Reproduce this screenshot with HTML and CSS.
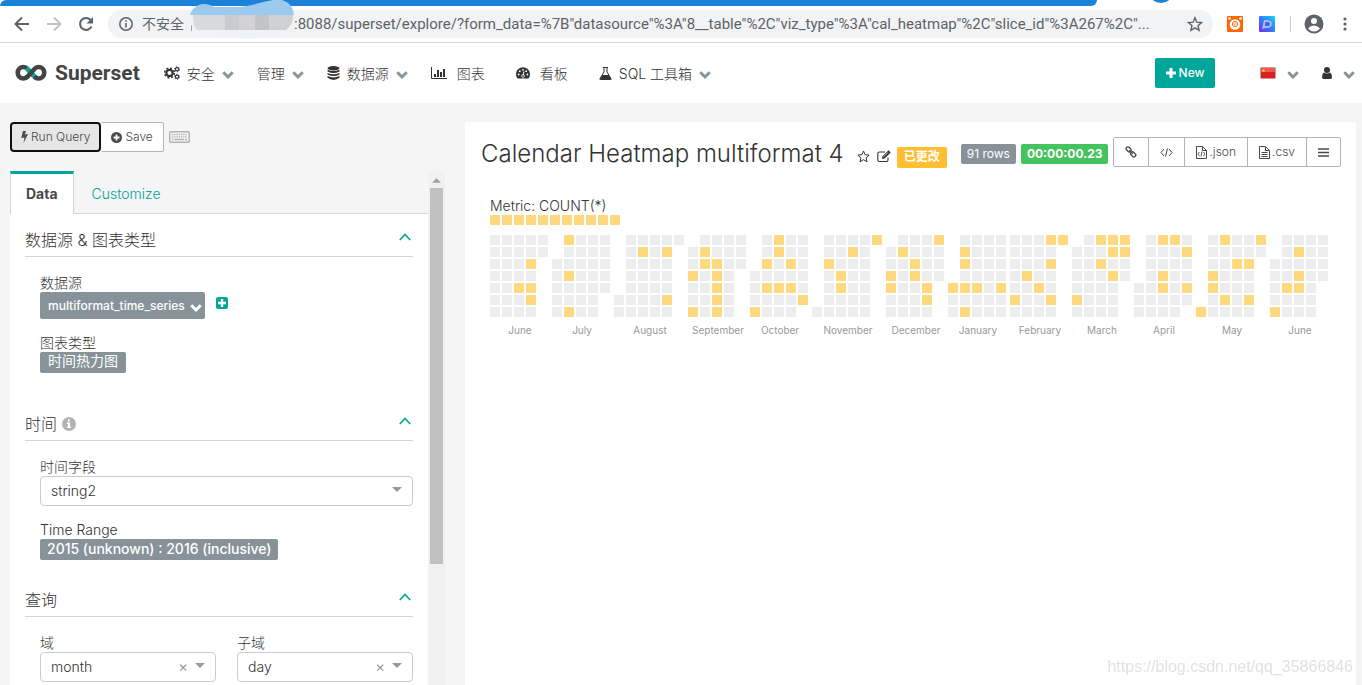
FILE: index.html
```html
<!DOCTYPE html>
<html lang="zh-CN">
<head>
<meta charset="utf-8">
<title>Calendar Heatmap multiformat 4</title>
<link rel="stylesheet" href="styles.css">
</head>
<body>
<svg class="defs" aria-hidden="true">
  <symbol id="chev-down" viewBox="0 0 12 8"><path d="M1.3 1.3 6 6l4.700-4.700" fill="none" stroke="currentColor" stroke-width="2.900"/></symbol>
  <symbol id="chev-up" viewBox="0 0 12 8"><path d="M.8 7 6 1.500 11.200 7" fill="none" stroke="currentColor" stroke-width="1.600"/></symbol>
  <symbol id="caret" viewBox="0 0 10 5"><path d="M0 0h10L5 5z" fill="currentColor"/></symbol>
  <symbol id="plus" viewBox="0 0 10 10"><path d="M3.500 0h3v3.500H10v3H6.500V10h-3V6.500H0v-3h3.500z" fill="currentColor"/></symbol>
</svg>

<div class="browser">
  <div class="tabstrip"><span class="strip-main"></span><span class="strip-dot"></span></div>
  <div class="toolbar">
    <button class="tool" aria-label="Back"><svg width="16" height="16" viewBox="0 0 16 16"><path d="M15 8H2M8 1.500 1.500 8 8 14.500" fill="none" stroke="#5f6368" stroke-width="2"/></svg></button>
    <button class="tool" aria-label="Forward"><svg width="16" height="16" viewBox="0 0 16 16"><path d="M1 8h13M8 1.500 14.500 8 8 14.500" fill="none" stroke="#bdc1c6" stroke-width="2"/></svg></button>
    <button class="tool reload" aria-label="Reload"><svg width="16" height="16" viewBox="0 0 16 16"><path d="M13.500 10.500A6 6 0 1 1 12.600 4" fill="none" stroke="#5f6368" stroke-width="2"/><path d="M15 1v6.500H8.500z" fill="#5f6368"/></svg></button>
    <div class="omnibox">
      <svg class="info" width="14" height="14" viewBox="0 0 14 14"><circle cx="7" cy="7" r="6.200" fill="none" stroke="#5f6368" stroke-width="1.500"/><path d="M7 6v4.500M7 3.300v1.500" stroke="#5f6368" stroke-width="1.600"/></svg>
      <span class="insecure">不安全</span>
      <span class="bar"></span>
      <span class="mask"><svg width="106" height="40" viewBox="0 0 106 40"><path d="M1 15C3 8 9 4 15 4q6 0 10 3h26C62 6 72 2 84 0h9c7 2 11 7 12 15z" fill="#9ccaee"/><path d="M2 15h103c1 7-2 14-9 17-12 1-14 5-28 6-8 2-30 0-39-5H12C4 29-2 23 2 15z" fill="#f0f2f5"/><path d="M4 15h32v15H8q-5-6-4-15z" fill="#d8dadc"/><path d="M36 15h14v15H36z" fill="#c8ccd2"/><path d="M50 15h16v15H50z" fill="#d3d3d5"/><path d="M66 15h14v15H66z" fill="#c2c4c6"/><path d="M80 15h24q0 10-7 15H80z" fill="#cfd1d3"/></svg></span>
      <span class="url">:8088/superset/explore/?form_data=%7B"datasource"%3A"8__table"%2C"viz_type"%3A"cal_heatmap"%2C"slice_id"%3A267%2C"...</span>
      <button class="tool star" aria-label="Bookmark"><svg width="16" height="16" viewBox="0 0 16 16"><path d="m8 1.800 1.800 4.400 4.700.4L11 9.700l1.100 4.600L8 11.800l-4.100 2.500L5 9.700 1.500 6.600l4.700-.4z" fill="none" stroke="#5f6368" stroke-width="1.400"/></svg></button>
    </div>
    <svg class="ext" width="16" height="16" viewBox="0 0 16 16"><rect width="16" height="16" rx="1" fill="#f60"/><circle cx="8" cy="8.500" r="5.300" fill="#fff"/><circle cx="2.500" cy="2.500" r="1.300" fill="#fff"/><circle cx="13.500" cy="2.500" r="1.300" fill="#fff"/><circle cx="8" cy="8" r="2.600" fill="none" stroke="#f60"/><circle cx="8" cy="8" r=".8" fill="#f60"/></svg>
    <svg class="ext" width="16" height="16" viewBox="0 0 16 16"><defs><linearGradient id="dg" x1="0" y1="1" x2="1" y2="0"><stop offset="0" stop-color="#7a2cf5"/><stop offset=".5" stop-color="#2f7df6"/><stop offset="1" stop-color="#12d4ff"/></linearGradient></defs><rect width="16" height="16" rx="1" fill="url(#dg)"/><path d="M3 13 5 4h4q4 1 4 4t-4 4H6z" fill="#a9b8ff"/><path d="M6.500 6H9q2 .5 2 2t-2 2H6z" fill="#3b62d8"/></svg>
    <span class="divider"></span>
    <button class="tool" aria-label="Profile"><svg width="20" height="20" viewBox="0 0 20 20"><circle cx="10" cy="10" r="9.500" fill="#5f6368"/><circle cx="10" cy="7" r="3" fill="#fff"/><path d="M4 14.500q2.500-3 6-3t6 3q-2.500 3-6 3t-6-3z" fill="#fff"/></svg></button>
    <button class="tool more" aria-label="Menu"><svg width="4" height="14" viewBox="0 0 4 14"><circle cx="2" cy="2" r="1.600" fill="#5f6368"/><circle cx="2" cy="7" r="1.600" fill="#5f6368"/><circle cx="2" cy="12" r="1.600" fill="#5f6368"/></svg></button>
  </div>
</div>

<header class="navbar">
  <a class="brand" href="#"><svg width="32" height="18" viewBox="0 0 32 18"><path d="M18.500 11.800 16 9l-3.500-4Q10.800 3 8.500 3a5.700 5.700 0 0 0 0 11.500q2.500 0 4.300-2.200" fill="none" stroke="#444" stroke-width="4.600"/><path d="m11.500 4 9 9.500" stroke="#00a699" stroke-width="4.600"/><path d="m11.700 13.500 7.500-8.300Q21 3 23.500 3a5.700 5.700 0 0 1 0 11.500q-2.500 0-4.200-1.900" fill="none" stroke="#444" stroke-width="4.600"/></svg><span>Superset</span></a>
  <nav class="menu">
    <a class="drop" href="#"><svg width="16" height="14" viewBox="0 0 16 14"><circle cx="5.500" cy="7" r="3.200" fill="none" stroke="#333" stroke-width="2.200"/><circle cx="5.500" cy="7" r="4.900" fill="none" stroke="#333" stroke-width="1.500" stroke-dasharray="2 1.850"/><circle cx="13" cy="3.300" r="1.600" fill="none" stroke="#333" stroke-width="1.200"/><circle cx="13" cy="3.300" r="2.500" fill="none" stroke="#333" stroke-dasharray="1.200 1.420"/><circle cx="13" cy="10.700" r="1.600" fill="none" stroke="#333" stroke-width="1.200"/><circle cx="13" cy="10.700" r="2.500" fill="none" stroke="#333" stroke-dasharray="1.200 1.420"/></svg><span>安全</span><svg class="chev" width="12" height="8"><use href="#chev-down"/></svg></a>
    <a class="drop" href="#"><span>管理</span><svg class="chev" width="12" height="8"><use href="#chev-down"/></svg></a>
    <a class="drop" href="#"><svg width="13" height="14" viewBox="0 0 13 14"><g fill="#333"><ellipse cx="6.500" cy="2.200" rx="6" ry="2.200"/><path d="M.5 3.700q6 2.600 12 0v1.700q-6 3-12 0zM.5 6.900q6 2.600 12 0v1.700q-6 3-12 0zM.5 10.100q6 2.600 12 0v1.700q-6 4.200-12 0z"/></g></svg><span>数据源</span><svg class="chev" width="12" height="8"><use href="#chev-down"/></svg></a>
    <a class="plain" href="#"><svg width="16" height="12" viewBox="0 0 16 12"><path d="M.5 0v11.500H16" fill="none" stroke="#333"/><path d="M3 7h2v3H3zM6 3h2v7H6zM9 5h2v5H9zM12 2h2v8h-2z" fill="#333"/></svg><span>图表</span></a>
    <a class="plain gauge" href="#"><svg width="14" height="12" viewBox="0 0 14 12"><path d="M1.500 11.500A7 7 0 1 1 12.500 11.500z" fill="#333"/><g fill="#fff"><circle cx="2.600" cy="7.500" r=".9"/><circle cx="3.800" cy="4.200" r=".9"/><circle cx="7" cy="2.800" r=".9"/><circle cx="10.200" cy="4.200" r=".9"/><circle cx="11.400" cy="7.500" r=".9"/></g><path d="m8 4.500-1 4" stroke="#fff"/><circle cx="7" cy="9" r="1.400" fill="none" stroke="#fff" stroke-width=".7"/></svg><span>看板</span></a>
    <a class="drop" href="#"><svg width="13" height="13" viewBox="0 0 13 13"><path d="M4 .5h5M5 .5v4.500L1 11.500q-.4 1 .6 1h9.800q1 0 .6-1L8 5V.5" fill="none" stroke="#333"/><path d="M3.200 8h6.600l2.700 4.500H.6z" fill="#333"/></svg><span>SQL 工具箱</span><svg class="chev" width="12" height="8"><use href="#chev-down"/></svg></a>
  </nav>
  <button class="new"><svg width="10" height="10"><use href="#plus"/></svg>New</button>
  <a class="lang" href="#" aria-label="Language"><svg width="16" height="12" viewBox="0 0 16 12"><rect x=".5" y=".5" width="15" height="11" rx="1" fill="#dc1f1f" stroke="#c99"/><path d="M1 1h14v4H1z" fill="#ec5a50"/><path d="m3.500 1.800.5 1.200h1.200l-1 .8.4 1.200-1.100-.7-1.100.7.4-1.200-1-.8H3z" fill="#fd5"/></svg><svg class="chev" width="12" height="8"><use href="#chev-down"/></svg></a>
  <a class="user" href="#" aria-label="User"><svg width="12" height="12" viewBox="0 0 12 12"><circle cx="6" cy="3" r="3" fill="#333"/><path d="M3 5.500q3 2 6 0 2 1 2 4.500 0 2-1.500 2h-7Q1 12 1 10q0-3.500 2-4.500z" fill="#333"/></svg><svg class="chev" width="12" height="8"><use href="#chev-down"/></svg></a>
</header>

<main class="explore">
  <section class="controls">
    <div class="actions">
      <button class="btn run"><svg width="7" height="12" viewBox="0 0 7 12"><path d="M2 0h3L3.800 3.500 7 3 2.500 12l1-5.500L.3 7z" fill="#484848"/></svg>Run Query</button><button class="btn save"><svg width="11" height="11" viewBox="0 0 11 11"><circle cx="5.500" cy="5.500" r="5.500" fill="#484848"/><path d="M5.500 2.500v6M2.500 5.500h6" stroke="#fff" stroke-width="1.800"/></svg>Save</button>
      <svg class="kbd" width="21" height="12" viewBox="0 0 21 12"><rect x=".75" y=".75" width="19.500" height="10.500" rx="1" fill="none" stroke="#b3b3b3" stroke-width="1.500"/><path d="M3 3.500h15M3 5.800h15" stroke="#b3b3b3" stroke-width="1.300" stroke-dasharray="1.300 .9"/><path d="M3 8.500h1.500m1 0h9.500m1 0H18" stroke="#b3b3b3" stroke-width="1.300"/></svg>
    </div>
    <div class="panel">
      <div class="scroll">
        <div class="tabs"><a class="tab active" href="#">Data</a><a class="tab" href="#">Customize</a></div>
        <div class="group source">
          <h2 class="group-head"><span>数据源 &amp; 图表类型</span><svg width="12" height="8"><use href="#chev-up"/></svg></h2>
          <div class="field">
            <span class="label">数据源</span>
            <div class="inline"><button class="ds">multiformat_time_series<svg width="12" height="8"><use href="#chev-down"/></svg></button><button class="add" aria-label="Add"><svg width="8" height="8"><use href="#plus"/></svg></button></div>
          </div>
          <div class="field"><span class="label">图表类型</span><button class="badge viz">时间热力图</button></div>
        </div>
        <div class="group">
          <h2 class="group-head"><span>时间</span><svg class="hint" width="14" height="14" viewBox="0 0 14 14"><circle cx="7" cy="7" r="7" fill="#b3b3b3"/><path d="M6 2.500h2v2H6zM5 5.500h3v4h1V11H5V9.500h1V7H5z" fill="#fff"/></svg><svg width="12" height="8"><use href="#chev-up"/></svg></h2>
          <div class="field"><label class="label" for="tf">时间字段</label><div class="pick"><select id="tf"><option>string2</option></select><svg class="caret" width="10" height="5"><use href="#caret"/></svg></div></div>
          <div class="field"><span class="label">Time Range</span><button class="badge">2015 (unknown) : 2016 (inclusive)</button></div>
        </div>
        <div class="group">
          <h2 class="group-head"><span>查询</span><svg width="12" height="8"><use href="#chev-up"/></svg></h2>
          <div class="pair">
            <div class="field"><label class="label" for="dom">域</label><div class="pick"><select id="dom"><option>month</option></select><button class="clear" aria-label="Clear">×</button><svg class="caret" width="10" height="5"><use href="#caret"/></svg></div></div>
            <div class="field"><label class="label" for="sub">子域</label><div class="pick"><select id="sub"><option>day</option></select><button class="clear" aria-label="Clear">×</button><svg class="caret" width="10" height="5"><use href="#caret"/></svg></div></div>
          </div>
        </div>
      </div>
      <div class="track"><svg width="9" height="5" viewBox="0 0 10 5"><path d="M0 5h10L5 0z" fill="#a0a0a0"/></svg><div class="thumb"></div></div>
    </div>
  </section>

  <section class="chart">
    <div class="chart-head">
      <h1>Calendar Heatmap multiformat 4</h1>
      <button class="mini fav" aria-label="Favourite"><svg width="13" height="13" viewBox="0 0 13 13"><path d="m6.500 1 1.600 3.700 4 .4-3 2.700.9 4-3.500-2.100L3 11.800l.9-4-3-2.700 4-.4z" fill="none" stroke="#333"/></svg></button>
      <button class="mini" aria-label="Edit"><svg width="14" height="13" viewBox="0 0 14 13"><path d="M11 7.500V10q0 1.500-1.500 1.500H2.300Q.8 11.500.8 10V3.500Q.8 2 2.300 2H8" fill="none" stroke="#333" stroke-width="1.100"/><path d="m5 9 .5-2.800L11.500.3l2.200 2.200-6 6z" fill="#333"/><path d="m6.500 6.800 4.500-4.500" stroke="#fff" stroke-width=".7"/></svg></button>
      <span class="tag altered">已更改</span>
      <span class="tag rows">91 rows</span>
      <span class="tag timer">00:00:00.23</span>
      <div class="btn-group">
        <button aria-label="Link"><svg width="12" height="12" viewBox="0 0 12 12"><g fill="none" stroke="#484848" stroke-width="1.300"><rect x=".8" y="1.600" width="5.600" height="3.600" rx="1.600" transform="rotate(45 3.600 3.400)"/><rect x="5.400" y="6.600" width="5.600" height="3.600" rx="1.600" transform="rotate(45 8.200 8.400)"/><path d="m4.300 4.300 3.400 3.400"/></g></svg></button>
        <button aria-label="Embed"><svg width="13" height="9" viewBox="0 0 13 9"><path d="M4 1 1 4.500 4 8M9 1l3 3.500L9 8M7.500.5l-2 8" fill="none" stroke="#484848"/></svg></button>
        <button class="export"><svg width="11" height="13" viewBox="0 0 11 13"><path d="M.5.500h6l4 4v8H.5zM6.500.500v4h4" fill="none" stroke="#484848"/><path d="M3.500 6 2 8l1.500 2M7.500 6 9 8l-1.500 2M6 5.500l-1 5" fill="none" stroke="#484848" stroke-width=".9"/></svg>.json</button>
        <button class="export"><svg width="11" height="13" viewBox="0 0 11 13"><path d="M.5.500h6l4 4v8H.5zM6.500.500v4h4M2.500 6.500h6M2.500 8.500h6M2.500 10.500h6" fill="none" stroke="#484848"/></svg>.csv</button>
        <button aria-label="More"><svg width="11" height="9" viewBox="0 0 11 9"><path d="M0 1h11M0 4.500h11M0 8h11" stroke="#484848" stroke-width="1.700"/></svg></button>
      </div>
    </div>
    <div class="chart-body">
      <div class="metric">Metric: COUNT(*)</div>
      <div class="legend"><i></i><i></i><i></i><i></i><i></i><i></i><i></i><i></i><i></i><i></i><i></i></div>
      <div class="heatmap" id="heatmap"></div>
    </div>
  </section>
</main>
<div class="watermark">https://blog.csdn.net/qq_35866846</div>
<script src="heatmap.js"></script>
</body>
</html>
```
FILE: styles.css
```css
* { box-sizing: border-box; }
body { margin: 0; min-height: 100vh; display: flex; flex-direction: column; background: #f5f5f5; color: #333; font: 300 14px/20px Inter, "Noto Sans CJK SC", sans-serif; overflow: hidden; }
svg { display: block; flex: none; }
a { color: inherit; text-decoration: none; }
button { font: inherit; color: inherit; padding: 0; border: 0; background: none; display: flex; align-items: center; justify-content: center; cursor: pointer; }
h1, h2 { margin: 0; font-weight: 300; }
.defs { position: absolute; width: 0; height: 0; }

.browser { background: #fff; border-bottom: 1px solid #dadada; }
.tabstrip { height: 6px; display: flex; gap: 51px; overflow: hidden; }
.strip-main { width: 1097px; height: 6px; background: #1a83d8; border-radius: 6px 0 6px 0; }
.strip-dot { width: 26px; height: 26px; margin-top: -23px; background: #1a83d8; border-radius: 50%; }
.toolbar { height: 36px; padding: 0 15px 0 14px; display: flex; align-items: center; }
.toolbar > .tool { margin-right: 16px; }
.toolbar > .reload { margin-right: 14px; }
.omnibox { flex: 1; min-width: 0; height: 28px; margin-right: 14px; padding: 0 10px 0 11px; border-radius: 14px; background: #f1f3f4; display: flex; align-items: center; color: #5f6368; font-weight: 400; position: relative; }
.insecure { margin-left: 9px; white-space: nowrap; }
.bar { width: 1px; height: 14px; margin-left: 7px; background: #9aa0a6; }
.mask { position: absolute; left: 81px; top: -10px; }
.url { flex: 1; min-width: 0; margin-left: 102px; overflow: hidden; white-space: nowrap; font: 400 15px/24px Roboto, sans-serif; }
.ext { margin-right: 16px; }
.divider { width: 1px; height: 16px; margin: 0 13px 0 -1px; background: #c8cacd; }
.toolbar > .more { margin: 0 0 0 3px; }

.navbar { height: 60px; background: #fff; display: flex; align-items: center; padding: 0 7px 0 15px; font-weight: 400; white-space: nowrap; }
.brand { display: flex; align-items: center; gap: 8px; margin-right: 24px; font: 700 21px/24px Roboto, sans-serif; color: #444; }
.menu { display: flex; align-items: center; font-weight: 300; line-height: 22px; }
.menu a, .lang, .user { display: flex; align-items: center; gap: 7px; }
.menu .drop { margin-right: 23px; }
.menu .plain { gap: 10px; margin-right: 31px; }
.menu span { padding-top: 2px; }
.chev { color: #879399; margin-top: 3px; }
.new { width: 60px; height: 30px; margin-left: auto; background: #00a699; color: #fff; border-radius: 2px; font-size: 12px; font-weight: 500; gap: 3px; }
.lang { margin-left: 45px; }
.menu + .new ~ .lang { gap: 11px; }
.menu + .new ~ .user { gap: 10px; margin-left: 22px; }

.explore { flex: 1; min-height: 0; padding: 19px 6px 0 10px; display: grid; grid-template-columns: 435px minmax(0, 1fr); gap: 20px; }
.controls { display: flex; flex-direction: column; min-width: 0; }
.actions { display: flex; align-items: center; margin-bottom: 19px; }
.btn { height: 30px; padding: 0 10px; gap: 3px; border: 1px solid #b3b3b3; border-radius: 2px; background: #fff; color: #484848; font-size: 12px; }
.run { border: 2px solid #111; border-radius: 4px; background: #e6e6e6; padding: 0 9px; }
.save { border-left: 0; }
.kbd { margin-left: 5px; }
.panel { flex: 1; display: flex; }
.scroll { flex: 1; background: #fff; }
.tabs { height: 43px; display: flex; background: #f5f5f5; border-bottom: 1px solid #cfd8dc; }
.tab { height: 42px; padding: 0 18px; color: #00a699; line-height: 46px; }
.tab.active { height: 43px; padding: 0 15px; background: #fff; border: 1px solid #cfd8dc; border-top: 3px solid #00a699; border-bottom: 0; color: #484848; font-weight: 700; line-height: 40px; }
.group { padding: 0 15px; }
.source { padding-bottom: 11px; }
.group-head { height: 43px; padding: 10px 2px 0 0; margin-bottom: 16px; border-bottom: 1px solid #cfd8dc; display: flex; align-items: center; font-size: 16px; line-height: 24px; }
.group-head svg:last-child { margin: 0 0 6px auto; color: #00a699; }
.hint { margin-left: 5px; }
.field { padding-left: 15px; margin-bottom: 14px; }
.label { display: block; height: 19px; line-height: 20px; }
.inline { display: flex; }
.ds { height: 27px; padding: 0 3px 0 8px; gap: 5px; border-radius: 2px; background: #879399; color: #fff; font-size: 12px; font-weight: 500; }
.ds svg { margin-top: 4px; }
.add { width: 12px; height: 12px; margin: 5px 0 0 11px; border-radius: 2px; background: #00a699; color: #fff; }
.badge { height: 21px; padding: 0 7px 2px; border-radius: 2px; background: #879399; color: #fff; font-weight: 500; font-size: 14px; }
.viz { padding: 0 8px 3px; font-weight: 400; }
.pick { position: relative; }
.pick select { width: 100%; height: 30px; padding: 0 10px; border: 1px solid #ccc; border-radius: 4px; background: #fff; color: #333; font: inherit; appearance: none; }
.caret { position: absolute; right: 11px; top: 11px; color: #999; }
.clear { position: absolute; right: 28px; top: 5px; color: #888; font-size: 15px; }
.pair { display: grid; grid-template-columns: 1fr 1fr; gap: 21px; padding-left: 15px; }
.pair .field { padding: 0; }
.track { width: 17px; background: #f1f1f1; display: flex; flex-direction: column; align-items: center; padding-top: 7px; }
.thumb { width: 13px; height: 376px; margin-top: 5px; background: #c1c1c1; }

.chart { background: #fff; border-radius: 2px; min-width: 0; }
.chart-head { display: flex; align-items: flex-start; padding: 15px 15px 0 16px; white-space: nowrap; }
h1 { font-size: 24px; line-height: 34px; }
.mini { height: 13px; margin: 13px 0 0 7px; }
.fav { margin-left: 13px; }
.tag { height: 20px; margin-top: 7px; padding: 0 6px; border-radius: 2px; color: #fff; font-size: 12px; line-height: 20px; font-weight: 400; }
.altered { height: 21px; margin: 10px 0 0 6px; padding: 0 7px; background: #ffbf33; font-weight: 700; }
.rows { margin-left: auto; background: #879399; }
.timer { margin-left: 5px; background: #45c35e; font-weight: 700; }
.btn-group { display: flex; height: 30px; margin-left: 5px; border: 1px solid #b3b3b3; border-radius: 2px; }
.btn-group button { padding: 0 11px; gap: 3px; color: #484848; font-size: 12px; }
.btn-group .export { gap: 2px; }
.btn-group button + button { border-left: 1px solid #b3b3b3; }
.chart-body { padding: 25px 25px 0; }
.metric { height: 19px; line-height: 20px; }
.legend { display: flex; gap: 2px; margin-bottom: 10px; }
.legend i, .day { width: 10px; height: 10px; background: #ffd97f; }
.heatmap { display: flex; gap: 4px; }
.month { display: flex; flex-direction: column; gap: 7px; font-size: 10px; line-height: 12px; font-weight: 400; color: #999; text-align: center; }
.month > span { padding-left: 2px; }
.days { display: grid; grid-template-rows: repeat(7, 10px); grid-auto-flow: column; grid-auto-columns: 10px; gap: 2px; }
.day { background: #ededed; }
.day.hit { background: #ffd97f; }
.watermark { position: fixed; right: 9px; bottom: 8px; font: 400 16px/20px "Liberation Sans", sans-serif; color: #e2e2e2; }
```
FILE: heatmap.js
```js
// First weekday offset (Monday = 0), number of days, days with a count.
const months = [
  ["June", 0, 30, [19, 24, 26, 27]],
  ["July", 2, 31, [6, 9, 12]],
  ["August", 5, 31, [11, 25, 29]],
  ["September", 1, 30, [3, 6, 8, 9, 16, 17, 18, 19, 20]],
  ["October", 3, 31, [4, 7, 9, 12, 13, 16, 21, 23, 31]],
  ["November", 6, 30, [4, 12, 13, 17, 30]],
  ["December", 1, 31, [3, 4, 8, 16, 17, 25, 26, 28]],
  ["January", 4, 31, [1, 5, 6, 8, 10, 15, 29]],
  ["February", 0, 29, [6, 11, 19, 22, 24, 27, 29]],
  ["March", 1, 31, [5, 14, 16, 21, 22, 24, 28, 29]],
  ["April", 4, 30, [11, 14, 15, 18, 26, 29]],
  ["May", 6, 31, [1, 5, 6, 9, 14, 18, 25, 28, 30]],
  ["June", 2, 30, [5, 10, 14, 16, 17]]
];

const root = document.getElementById("heatmap");
for (const [name, offset, count, hits] of months) {
  const month = document.createElement("div");
  month.className = "month";
  const days = document.createElement("div");
  days.className = "days";
  for (let d = 1; d <= count; d++) {
    const cell = document.createElement("div");
    cell.className = hits.includes(d) ? "day hit" : "day";
    if (d === 1) cell.style.gridRow = offset + 1;
    days.append(cell);
  }
  const label = document.createElement("span");
  label.textContent = name;
  month.append(days, label);
  root.append(month);
}
```
